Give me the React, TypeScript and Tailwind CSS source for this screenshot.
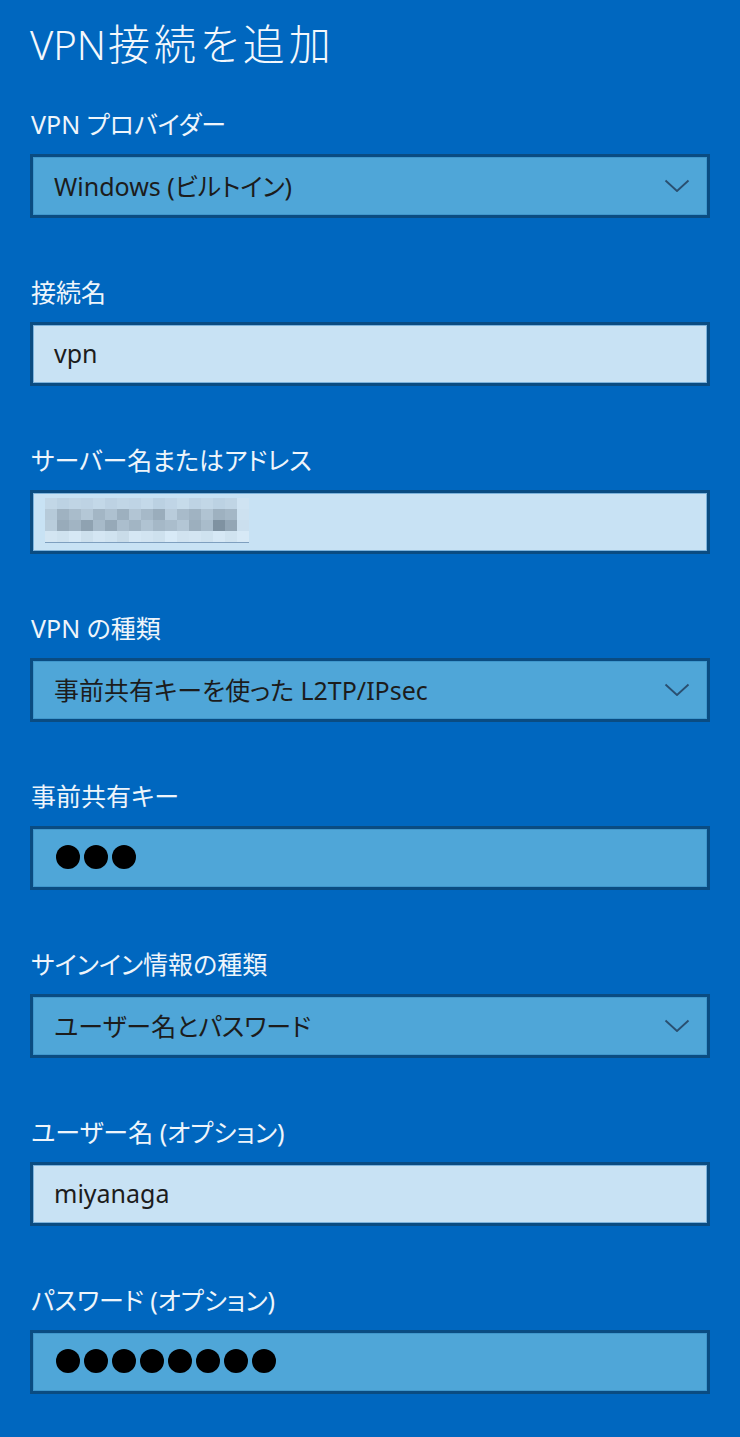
import React from 'react';

type Field =
    | { kind: 'select'; label: string; value: string }
    | { kind: 'text'; label: string; value: string }
    | { kind: 'masked'; label: string; count: number }
    | { kind: 'blurred'; label: string };

const fields: Field[] = [
    { kind: 'select', label: 'VPN プロバイダー', value: 'Windows (ビルトイン)' },
    { kind: 'text', label: '接続名', value: 'vpn' },
    { kind: 'blurred', label: 'サーバー名またはアドレス' },
    { kind: 'select', label: 'VPN の種類', value: '事前共有キーを使った L2TP/IPsec' },
    { kind: 'masked', label: '事前共有キー', count: 3 },
    { kind: 'select', label: 'サインイン情報の種類', value: 'ユーザー名とパスワード' },
    { kind: 'text', label: 'ユーザー名 (オプション)', value: 'miyanaga' },
    { kind: 'masked', label: 'パスワード (オプション)', count: 8 },
];

// pixelated (mosaic) server address, 17 columns x 4 rows
const mosaic: string[][] = [
    ['bg-[#c2d7e7]', 'bg-[#bcd2e3]', 'bg-[#c0d5e5]', 'bg-[#bed3e4]', 'bg-[#c3d8e8]', 'bg-[#bdd2e3]', 'bg-[#c1d6e6]', 'bg-[#bfd4e5]', 'bg-[#c4d9e9]', 'bg-[#bbd1e2]', 'bg-[#c0d5e6]', 'bg-[#c6dbea]', 'bg-[#bed3e4]', 'bg-[#c2d7e7]', 'bg-[#bcd2e3]', 'bg-[#c0d5e5]', 'bg-[#cfe3f2]'],
    ['bg-[#b6cad9]', 'bg-[#9fb2c1]', 'bg-[#a9bccb]', 'bg-[#b4c7d6]', 'bg-[#a3b6c5]', 'bg-[#aec1d0]', 'bg-[#9db0bf]', 'bg-[#b2c5d4]', 'bg-[#a6b9c8]', 'bg-[#9aadbc]', 'bg-[#b9ccdb]', 'bg-[#a8bbca]', 'bg-[#a0b3c2]', 'bg-[#b0c3d2]', 'bg-[#9eb1c0]', 'bg-[#a4b7c6]', 'bg-[#cde1f0]'],
    ['bg-[#b9cddc]', 'bg-[#98abba]', 'bg-[#a1b4c3]', 'bg-[#8fa2b1]', 'bg-[#a7bac9]', 'bg-[#96a9b8]', 'bg-[#abbecd]', 'bg-[#a2b5c4]', 'bg-[#b0c3d2]', 'bg-[#a5b8c7]', 'bg-[#aabdcc]', 'bg-[#b3c6d5]', 'bg-[#9cafbe]', 'bg-[#a9bccb]', 'bg-[#7f92a1]', 'bg-[#93a6b5]', 'bg-[#cbdfee]'],
    ['bg-[#d3e5f2]', 'bg-[#cfe2ef]', 'bg-[#d6e8f5]', 'bg-[#cde0ed]', 'bg-[#d4e6f3]', 'bg-[#d0e3f0]', 'bg-[#c9dce9]', 'bg-[#d5e7f4]', 'bg-[#d2e4f1]', 'bg-[#cee1ee]', 'bg-[#d8eaf7]', 'bg-[#d1e3f0]', 'bg-[#d3e5f2]', 'bg-[#cfe2ef]', 'bg-[#d6e8f5]', 'bg-[#d0e3f0]', 'bg-[#d7e9f6]'],
];

const font = "font-['Noto_Sans','Noto_Sans_CJK_JP',sans-serif] [font-feature-settings:'palt']";

function Chevron() {
    return (
        <svg width="26" height="14" viewBox="0 0 26 14" fill="none" className="shrink-0">
            <polyline points="1.5,1.5 13,12 24.5,1.5" stroke="#2a4f70" strokeWidth="1.8" strokeLinejoin="round" />
        </svg>
    );
}

function Box({ field }: { field: Field }) {
    const light = field.kind === 'text' || field.kind === 'blurred';
    return (
        <div
            className={`h-[64px] flex items-center justify-between border-[3px] border-[#0a4c82] pl-[21px] pr-[17px] ${
                light
                    ? 'bg-[#c8e2f4] shadow-[inset_0_0_0_1px_#7db3dc]'
                    : 'bg-[#4fa6d8] shadow-[inset_0_0_0_1px_#3f97cd]'
            }`}
        >
            {field.kind === 'select' && (
                <>
                    <span className="text-[25px] leading-none text-[#1c1c1c]">{field.value}</span>
                    <Chevron />
                </>
            )}
            {field.kind === 'text' && (
                <span className="text-[25px] leading-none text-[#1c1c1c] -mt-[2px]">{field.value}</span>
            )}
            {field.kind === 'masked' && (
                <div className="flex gap-[4px] ml-[2px] -mt-[2px]">
                    {Array.from({ length: field.count }).map((_, i) => (
                        <span key={i} className="w-[24px] h-[24px] rounded-full bg-black" />
                    ))}
                </div>
            )}
            {field.kind === 'blurred' && (
                <div className="-ml-[9px] -mt-[4px] flex flex-col border-b border-[#7e9fbf]">
                    {mosaic.map((row, r) => (
                        <div key={r} className="flex">
                            {row.map((c, i) => (
                                <span key={i} className={`w-[12px] h-[11px] ${c}`} />
                            ))}
                        </div>
                    ))}
                </div>
            )}
        </div>
    );
}

export default function App() {
    return (
        <div className={`min-h-[1437px] w-full bg-[#0067bf] px-[30px] pt-[23px] ${font}`}>
            <h1 className="text-[40px] leading-none h-[40px] font-light text-[#f4f8fc] whitespace-nowrap">
                VPN<span className="ml-[2px] text-[42px] tracking-[4px]">接続を追加</span>
            </h1>
            <div className="mt-[44px] flex flex-col gap-[57px] w-[680px]">
                {fields.map((f) => (
                    <div key={f.label} className="flex flex-col">
                        <label className="text-[25px] leading-[34px] h-[34px] mb-[13px] text-[#eef5fb] ml-[1px]">{f.label}</label>
                        <Box field={f} />
                    </div>
                ))}
            </div>
        </div>
    );
}
